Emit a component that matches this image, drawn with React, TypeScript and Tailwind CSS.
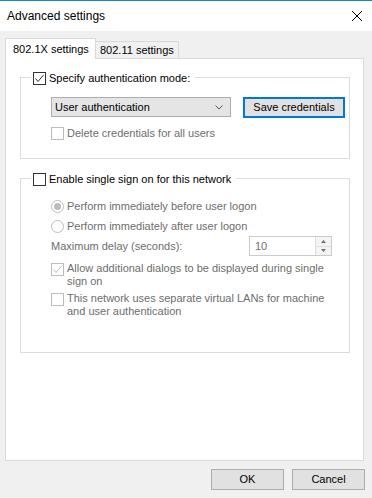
import React from 'react';

function CheckBox({ checked, disabled }: { checked?: boolean; disabled?: boolean }) {
  return (
    <span
      className={`flex h-[13px] w-[13px] shrink-0 items-center justify-center border bg-white ${
        disabled ? 'border-[#bcbcbc]' : 'border-[#333333]'
      }`}
    >
      {checked && (
        <svg width="11" height="11" viewBox="0 0 11 11">
          <path
            d="M1.5 5.5 L4 8.5 L9.5 2"
            fill="none"
            stroke={disabled ? '#bcbcbc' : '#333333'}
            strokeWidth="1"
          />
        </svg>
      )}
    </span>
  );
}

function Radio({ checked }: { checked?: boolean }) {
  return (
    <span className="flex h-[13px] w-[13px] shrink-0 items-center justify-center rounded-full border border-[#bcbcbc] bg-white">
      {checked && <span className="h-[7px] w-[7px] rounded-full bg-[#bcbcbc]" />}
    </span>
  );
}

export default function App() {
  return (
    <div className="flex h-[498px] w-[372px] flex-col border-t border-[#1883d7] bg-[#f0f0f0] font-['Liberation_Sans',Arial,sans-serif] text-[11px] leading-[13px] text-black">
      {/* title bar */}
      <div className="flex h-[30px] shrink-0 items-center justify-between bg-white pl-[7px] pr-[10px]">
        <span className="text-[12px]">Advanced settings</span>
        <svg width="10" height="10" viewBox="0 0 10 10">
          <path d="M0 0 L10 10 M10 0 L0 10" stroke="#000" strokeWidth="1" />
        </svg>
      </div>

      <div className="flex flex-1 flex-col pl-[5px] pr-[8px] pt-[7px]">
        {/* tabs */}
        <div className="flex h-[20px] items-end">
          <div className="relative z-10 -mb-px flex h-[21px] w-[91px] items-center border border-b-0 border-[#d9d9d9] bg-white pl-[7px]">
            802.1X settings
          </div>
          <div className="flex h-[17px] w-[83px] items-center border border-b-0 border-l-0 border-[#d9d9d9] pl-[4px]">
            802.11 settings
          </div>
        </div>

        {/* tab panel */}
        <div className="h-[403px] border border-[#d9d9d9] bg-white pl-[14px] pt-[18px]">
          {/* authentication group */}
          <div className="h-[82px] w-[330px] border border-[#dcdcdc]">
            <div className="-mt-[6px] ml-[10px] flex h-[13px] w-fit items-center gap-[3px] bg-white pl-[2px] pr-[5px]">
              <CheckBox checked />
              <span>Specify authentication mode:</span>
            </div>
            <div className="ml-[30px] mt-[12px] flex items-start">
              <div className="flex h-[20px] w-[180px] items-center justify-between border border-[#adadad] bg-[#e5e5e5] pl-[3px] pr-[7px]">
                <span>User authentication</span>
                <svg width="8" height="5" viewBox="0 0 8 5">
                  <path d="M0.5 0.5 L4 4 L7.5 0.5" fill="none" stroke="#555" strokeWidth="1" />
                </svg>
              </div>
              <div className="ml-[12px] flex h-[21px] w-[102px] items-center justify-center border-2 border-[#0078d7] bg-[#e1e1e1]">
                Save credentials
              </div>
            </div>
            <div className="ml-[30px] mt-[9px] flex h-[13px] items-center gap-[3px] text-[#6d6d6d]">
              <CheckBox disabled />
              <span>Delete credentials for all users</span>
            </div>
          </div>

          {/* single sign on group */}
          <div className="mt-[19px] h-[175px] w-[330px] border border-[#dcdcdc]">
            <div className="-mt-[6px] ml-[10px] flex h-[13px] w-fit items-center gap-[3px] bg-white pl-[2px] pr-[5px]">
              <CheckBox />
              <span>Enable single sign on for this network</span>
            </div>
            <div className="ml-[30px] mt-[14px] flex h-[13px] items-center gap-[3px] text-[#6d6d6d]">
              <Radio checked />
              <span>Perform immediately before user logon</span>
            </div>
            <div className="ml-[30px] mt-[7px] flex h-[13px] items-center gap-[3px] text-[#6d6d6d]">
              <Radio />
              <span>Perform immediately after user logon</span>
            </div>
            <div className="ml-[30px] mt-[3px] flex h-[20px] items-center text-[#6d6d6d]">
              <span className="w-[198px]">Maximum delay (seconds):</span>
              <div className="flex h-[20px] w-[83px] border border-[#cccccc] bg-white">
                <span className="flex flex-1 items-center pl-[5px]">10</span>
                <div className="flex w-[16px] flex-col border-l border-[#dcdcdc] bg-[#f4f4f4]">
                  <span className="flex flex-1 items-center justify-center border-b border-[#dcdcdc]">
                    <svg width="5" height="3" viewBox="0 0 5 3">
                      <path d="M0 3 L2.5 0 L5 3 Z" fill="#707070" />
                    </svg>
                  </span>
                  <span className="flex flex-1 items-center justify-center">
                    <svg width="5" height="3" viewBox="0 0 5 3">
                      <path d="M0 0 L2.5 3 L5 0 Z" fill="#707070" />
                    </svg>
                  </span>
                </div>
              </div>
            </div>
            <div className="ml-[30px] mt-[6px] flex items-start gap-[3px] text-[#6d6d6d]">
              <span className="mt-[1px]">
                <CheckBox checked disabled />
              </span>
              <span>
                Allow additional dialogs to be displayed during single
                <br />
                sign on
              </span>
            </div>
            <div className="ml-[30px] mt-[4px] flex items-start gap-[3px] text-[#6d6d6d]">
              <span className="mt-[1px]">
                <CheckBox disabled />
              </span>
              <span>
                This network uses separate virtual LANs for machine
                <br />
                and user authentication
              </span>
            </div>
          </div>
        </div>

        {/* dialog buttons */}
        <div className="-mr-px mt-[8px] flex justify-end gap-[8px]">
          <div className="flex h-[21px] w-[73px] items-center justify-center border border-[#adadad] bg-[#e1e1e1]">
            OK
          </div>
          <div className="flex h-[21px] w-[73px] items-center justify-center border border-[#adadad] bg-[#e1e1e1]">
            Cancel
          </div>
        </div>
      </div>
    </div>
  );
}
